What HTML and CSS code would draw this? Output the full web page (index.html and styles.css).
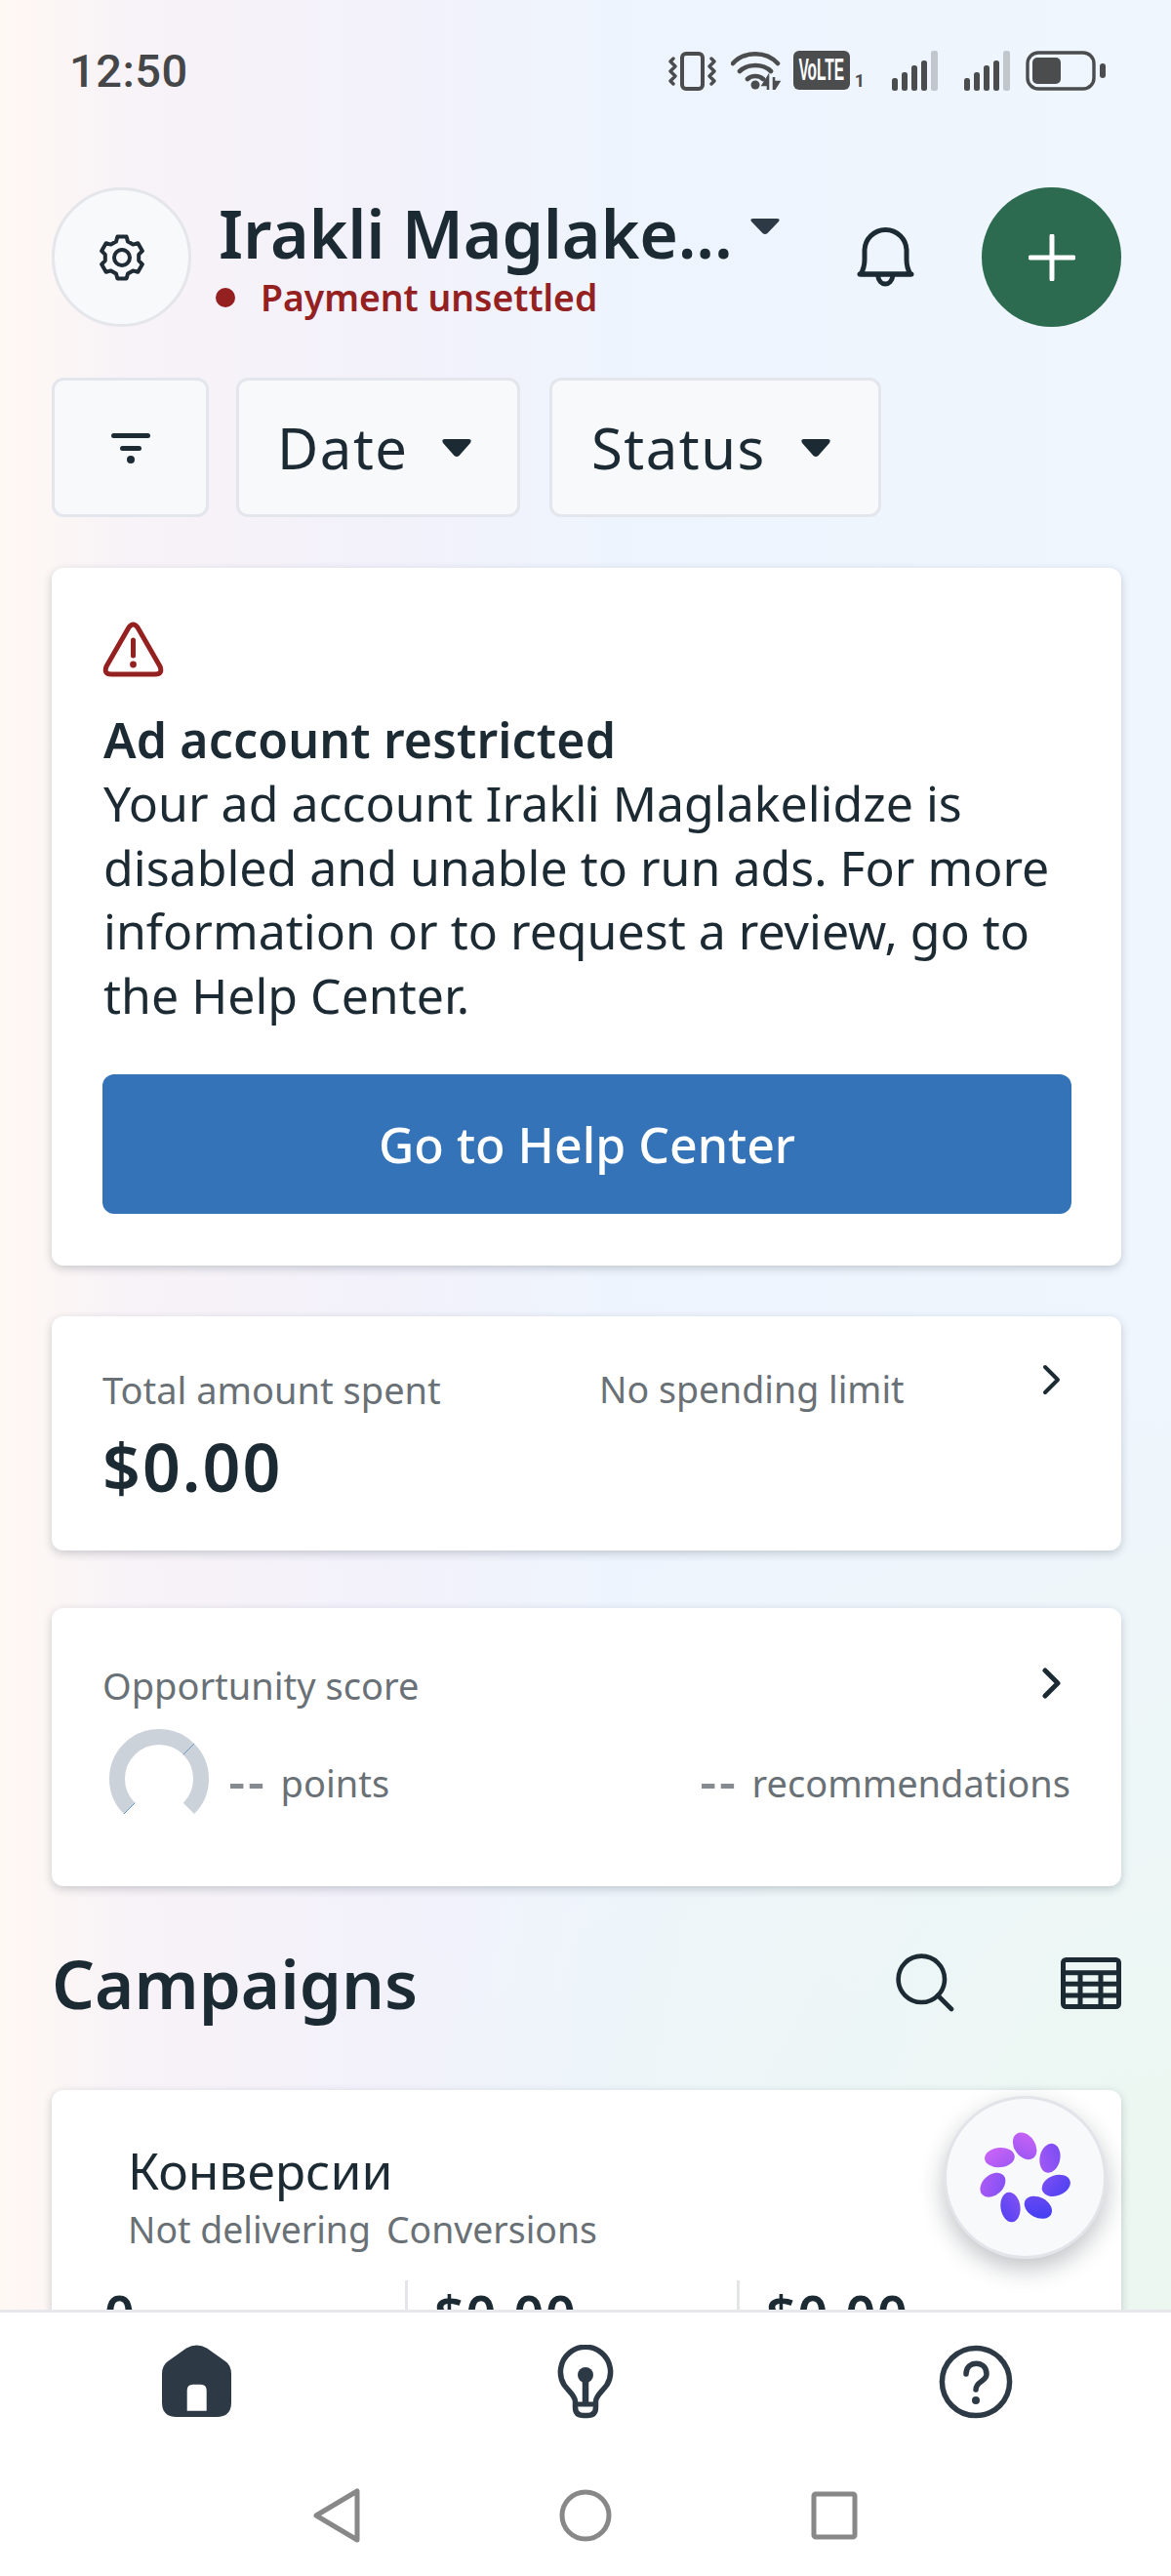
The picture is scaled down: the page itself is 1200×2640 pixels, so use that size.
FILE: index.html
```html
<!DOCTYPE html>
<html lang="en">
<head>
<meta charset="utf-8">
<title>Ads Manager</title>
<link rel="stylesheet" href="styles.css">
</head>
<body>
<div class="phone">
  <div class="status">
    <span class="time">12:50</span>
    <div class="status-icons">
      <svg class="si-vib" width="49" height="40" viewBox="0 0 49 40" fill="none" stroke="#4a4c4e"><rect x="14" y="2" width="21" height="36" rx="4" stroke-width="4"/><path d="M5 7l-3 3 5 5-5 5 5 5-5 5 3 3M44 7l3 3-5 5 5 5-5 5 5 5-3 3" stroke-width="3.4" stroke-linecap="round" stroke-linejoin="round"/></svg>
      <svg class="si-wifi" width="52" height="40" viewBox="0 0 52 40" fill="none" stroke="#4a4c4e" stroke-width="4.6"><path d="M2 13C14 0 36 0 48 13M9 21c8-8 24-8 32 0M17 29c4-4 12-4 16 0" stroke-linecap="round"/><circle cx="25" cy="35" r="4.5" fill="#4a4c4e" stroke="none"/><path d="M38 40V27l-5 8h5M44 27v13l5-8h-5" stroke-width="2.6" fill="#4a4c4e"/></svg>
      <div class="volte"><span class="volte-box"><span class="volte-text">VoLTE</span></span><span class="volte-sub">1</span></div>
      <svg class="si-sig" width="47" height="41" viewBox="0 0 47 41"><g fill="#4a4c4e"><rect x="0" y="28" width="6" height="13" rx="2.5"/><rect x="10" y="22" width="6" height="19" rx="2.5"/><rect x="20" y="15" width="6" height="26" rx="2.5"/><rect x="30" y="10" width="6" height="31" rx="2.5"/></g><rect x="40" y="0" width="7" height="41" rx="2.5" fill="#c2c6cd"/></svg>
      <svg class="si-sig" width="47" height="41" viewBox="0 0 47 41"><g fill="#4a4c4e"><rect x="0" y="28" width="6" height="13" rx="2.5"/><rect x="10" y="22" width="6" height="19" rx="2.5"/><rect x="20" y="15" width="6" height="26" rx="2.5"/><rect x="30" y="10" width="6" height="31" rx="2.5"/></g><rect x="40" y="0" width="7" height="41" rx="2.5" fill="#c2c6cd"/></svg>
      <svg class="si-bat" width="82" height="41" viewBox="0 0 82 41" fill="none"><rect x="2" y="2" width="68" height="37" rx="11" stroke="#4a4c4e" stroke-width="3.4"/><rect x="7" y="7" width="29" height="27" rx="5" fill="#4a4c4e"/><rect x="76" y="13" width="6" height="15" rx="3" fill="#4a4c4e"/></svg>
    </div>
  </div>

  <main class="main">
    <header class="head">
      <div class="gear-btn">
        <svg width="52" height="52" viewBox="-2 -2 52 52" fill="none" stroke="#1f2b35" stroke-width="4" stroke-linejoin="round"><polygon points="19.4,2.5 28.6,2.5 30,7.6 35.25,10.6 40.35,9.3 44.9,17.2 41.2,20.95 41.2,27.05 44.9,30.8 40.35,38.7 35.25,37.4 30,40.45 28.6,45.5 19.4,45.5 18,40.45 12.75,37.4 7.65,38.7 3.1,30.8 6.8,27.05 6.8,20.95 3.1,17.2 7.65,9.3 12.75,10.6 18,7.6"/><circle cx="24" cy="24" r="8"/></svg>
      </div>
      <div class="account">
        <div class="account-row">
          <span class="account-name">Irakli Maglake...</span>
          <svg class="caret-lg" width="32" height="18" viewBox="0 0 32 18"><path d="M4 1h24q4 0 2 3L18.500 16q-2.500 2-5 0L2 4Q0 1 4 1z" fill="#2d3a45"/></svg>
        </div>
        <div class="pay"><i class="pay-dot"></i><span>Payment unsettled</span></div>
      </div>
      <svg class="bell" width="62" height="66" viewBox="0 0 62 66" fill="none" stroke="#1c2b33" stroke-width="5" stroke-linejoin="round"><path d="M5 51C8 46 9 42 9 36V27A21.500 21.500 0 0 1 52 27V36C52 42 53 46 56 51Z"/><path d="M22.500 52c1.500 12 14 12 15.500 0"/><path d="M4 51H57" stroke-linecap="round"/></svg>
      <div class="add-btn"><svg width="48" height="48" viewBox="0 0 48 48" stroke="#fff" stroke-width="5" stroke-linecap="round"><path d="M24 2v44M2 24h44"/></svg></div>
    </header>

    <div class="filters">
      <div class="chip chip-icon"><svg width="40" height="34" viewBox="0 0 40 34"><rect x="0" y="2" width="40" height="5" rx="2.500" fill="#1c2b33"/><rect x="9" y="15" width="22" height="5" rx="2.500" fill="#1c2b33"/><circle cx="20" cy="29" r="4" fill="#1c2b33"/></svg></div>
      <div class="chip chip-date"><span>Date</span><svg width="32" height="20" viewBox="0 0 32 20"><path d="M4 1h24q4 0 2 4L18.500 18q-2.500 2-5 0L2 5Q0 1 4 1z" fill="#1c2b33"/></svg></div>
      <div class="chip chip-status"><span>Status</span><svg width="32" height="20" viewBox="0 0 32 20"><path d="M4 1h24q4 0 2 4L18.500 18q-2.500 2-5 0L2 5Q0 1 4 1z" fill="#1c2b33"/></svg></div>
    </div>

    <section class="card card-alert">
      <svg class="warn" width="63" height="57" viewBox="0 0 63 57" fill="none" stroke="#94201f" stroke-width="5" stroke-linejoin="round"><path d="M27 6q4.500-6 9 0l23 40q3 8-5 8H9q-8 0-5-8z"/><path d="M31.500 19v16" stroke-linecap="round"/><circle cx="31.500" cy="44" r="3.400" fill="#94201f" stroke="none"/></svg>
      <h2 class="alert-title">Ad account restricted</h2>
      <p class="alert-body">Your ad account Irakli Maglakelidze is<br>disabled and unable to run ads. For more<br>information or to request a review, go to<br>the Help Center.</p>
      <div class="help-btn">Go to Help Center</div>
    </section>

    <section class="card card-spent">
      <div class="spent-col">
        <div class="label">Total amount spent</div>
        <div class="amount">$0.00</div>
      </div>
      <div class="label limit">No spending limit</div>
      <svg class="chev" width="22" height="32" viewBox="0 0 22 32" fill="none" stroke="#1c2b33" stroke-width="4" stroke-linecap="round" stroke-linejoin="round"><path d="M4 3l13 13L4 29"/></svg>
    </section>

    <section class="card card-score">
      <div class="score-top">
        <div class="label">Opportunity score</div>
        <svg class="chev" width="22" height="32" viewBox="0 0 22 32" fill="none" stroke="#1c2b33" stroke-width="5" stroke-linecap="round" stroke-linejoin="round"><path d="M4 3l13 13L4 29"/></svg>
      </div>
      <div class="score-row">
        <svg class="gauge" width="104" height="104" viewBox="0 0 104 104" fill="none"><path d="M21.600 82.400A43 43 0 1 1 82.400 82.400" stroke="#ccd2d9" stroke-width="16"/><path d="M76.700 27.300L88 16M27.300 76.700L16 88" stroke="#6a9ac0" stroke-width="1"/></svg>
        <span class="label points"><span class="dash">--</span> points</span>
        <span class="label recs"><span class="dash">--</span> recommendations</span>
      </div>
    </section>

    <div class="camp-head">
      <h2 class="camp-title">Campaigns</h2>
      <svg class="camp-search" width="62" height="60" viewBox="0 0 62 60" fill="none" stroke="#1c2b33" stroke-width="4.600" stroke-linecap="round"><circle cx="26.300" cy="26.300" r="23.700"/><path d="M43 43l14 14"/></svg>
      <svg class="camp-table" width="62" height="53" viewBox="0 0 62 53" fill="none" stroke="#1c2b33" stroke-width="5"><rect x="2.500" y="2.500" width="57" height="48" rx="3"/><path d="M2.500 15.700h57M2.500 27.300h57M2.500 39h57M20 15.700V51M41 15.700V51"/></svg>
    </div>

    <section class="card card-camp">
      <div class="camp-name">Конверсии</div>
      <div class="label camp-sub"><span>Not delivering</span><span>Conversions</span></div>
      <div class="stats">
        <div class="stat stat-a">0</div>
        <div class="stat stat-b">$0.00</div>
        <div class="stat stat-c">$0.00</div>
      </div>
    </section>
  </main>

  <div class="fab">
    <svg width="97" height="97" viewBox="188 190 290 290">
      <defs><linearGradient id="petal" gradientUnits="userSpaceOnUse" x1="240" y1="200" x2="400" y2="470"><stop offset="0" stop-color="#db68f6"/><stop offset="1" stop-color="#3b3cf2"/></linearGradient></defs>
      <g fill="url(#petal)">
        <ellipse cx="332" cy="239" rx="45" ry="32" transform="rotate(55 332 239)"/>
        <ellipse cx="255" cy="274" rx="46" ry="30" transform="rotate(-5 255 274)"/>
        <ellipse cx="409" cy="276" rx="45" ry="31" transform="rotate(-78 409 276)"/>
        <ellipse cx="428" cy="360" rx="45" ry="31" transform="rotate(-20 428 360)"/>
        <ellipse cx="234" cy="358" rx="44" ry="31" transform="rotate(-42 234 358)"/>
        <ellipse cx="288" cy="426" rx="46" ry="30" transform="rotate(82 288 426)"/>
        <ellipse cx="373" cy="427" rx="45" ry="31" transform="rotate(28 373 427)"/>
      </g>
    </svg>
  </div>

  <nav class="bottom">
    <div class="tabs">
      <svg width="71" height="74" viewBox="0 0 71 74"><path d="M25 3.500L6 17Q0 21 0 30V59Q0 74 15 74H56Q71 74 71 59V30Q71 21 65 17L46 3.500Q35.500-2.500 25 3.500Z" fill="#2d3a45"/><path d="M25.700 67.700V46.700q0-6 6-6h8q6 0 6 6v21z" fill="#fff"/></svg>
      <svg width="62" height="76" viewBox="0 0 62 76" fill="none" stroke="#2d3a45" stroke-width="5.500" stroke-linejoin="round"><path d="M20.500 62V58C20.500 52 14 48 9 41A25.600 25.600 0 1 1 53 41C48 48 41.500 52 41.500 58V64Q41.500 72.500 33 72.500H29Q20.500 72.500 20.500 64Z"/><path d="M20.500 61H41.500" stroke-width="5"/><path d="M31 31V61" stroke-width="6.500"/><circle cx="31" cy="31" r="8" fill="#2d3a45" stroke="none"/></svg>
      <svg width="76" height="76" viewBox="0 0 76 76" fill="none" stroke="#2d3a45" stroke-width="5.500" stroke-linecap="round"><circle cx="38" cy="38" r="34.600"/><path d="M28 30C28 15.500 49 15.500 49 30C49 38 38 37 38 46"/><circle cx="38" cy="57" r="4" fill="#2d3a45" stroke="none"/></svg>
    </div>
    <div class="sysnav">
      <svg width="48" height="56" viewBox="0 0 48 56" fill="none" stroke="#888" stroke-width="5" stroke-linejoin="round"><path d="M45 3v50L3 28z"/></svg>
      <svg width="54" height="54" viewBox="0 0 54 54" fill="none" stroke="#888" stroke-width="5"><circle cx="27" cy="27" r="24"/></svg>
      <svg width="48" height="50" viewBox="0 0 48 50" fill="none" stroke="#888" stroke-width="5" stroke-linejoin="round"><rect x="3" y="3" width="42" height="44" rx="2"/></svg>
    </div>
  </nav>
</div>
</body>
</html>
```

FILE: styles.css
```css
* { box-sizing: border-box; }
html, body { margin: 0; padding: 0; }
body { width: 1200px; height: 2640px; overflow: hidden; font-family: "Noto Sans", "Open Sans", sans-serif; color: #1c2b33; }

.phone {
  position: relative;
  width: 1200px;
  height: 2640px;
  overflow: hidden;
  display: flex;
  flex-direction: column;
  background:
    radial-gradient(900px 1000px at 1250px 2350px, rgba(235,247,238,.95), rgba(235,247,238,0)),
    linear-gradient(90deg, #fff8f3 0%, #f8f3f7 10%, #f3f1fa 30%, #eef4fd 52%, #eff6fe 100%);
}

.status { height: 192px; flex: none; padding: 52px 67px 0 71px; display: flex; justify-content: space-between; align-items: flex-start; }
.time { font-family: Roboto, sans-serif; font-weight: 500; font-size: 47px; line-height: 42px; color: #444648; letter-spacing: .5px; }
.status-icons { display: flex; align-items: flex-start; }
.si-vib { margin-top: 1px; }
.si-wifi { margin-left: 15px; }
.volte { margin-left: 12px; display: flex; align-items: flex-end; }
.volte-box { width: 58px; height: 40px; border-radius: 6px; background: #4a4c4e; display: flex; align-items: center; justify-content: center; overflow: hidden; }
.volte-text { flex: none; color: #fff; font-family: "Liberation Sans", sans-serif; font-weight: 700; font-size: 31px; line-height: 40px; transform: scaleX(.5); }
.volte-sub { font-family: Roboto, sans-serif; font-weight: 700; font-size: 18px; line-height: 18px; color: #4a4c4e; margin-left: 5px; }
.si-sig { margin-left: 28px; }
.si-sig + .si-sig { margin-left: 27px; }
.si-bat { margin-left: 16px; }

.main { flex: 1; min-height: 0; overflow: hidden; padding: 0 51px 0 53px; display: flex; flex-direction: column; }

.head { height: 143px; flex: none; display: flex; align-items: center; }
.gear-btn { width: 143px; height: 143px; flex: none; border-radius: 50%; background: #f8f9fb; border: 3px solid #e4e6ea; display: flex; align-items: center; justify-content: center; }
.account { margin-left: 28px; width: 653px; flex: none; align-self: flex-start; padding-top: 7px; }
.account-row { display: flex; align-items: flex-start; height: 80px; }
.account-name { font-size: 68px; line-height: 80px; font-weight: 600; color: #1c2b33; letter-spacing: -.2px; }
.caret-lg { margin: 24px 0 0 18px; }
.pay { display: flex; align-items: center; height: 44px; margin-top: 4px; color: #94201f; font-size: 37.300px; line-height: 44px; font-weight: 600; }
.pay-dot { width: 20px; height: 20px; border-radius: 50%; background: #94201f; margin: 0 26px 0 -3px; }
.bell { flex: none; margin: -1px 0 0 0; }
.add-btn { width: 143px; height: 143px; flex: none; margin-left: auto; border-radius: 50%; background: #2c6b4f; display: flex; align-items: center; justify-content: center; }

.filters { display: flex; gap: 28px; margin-top: 52px; height: 143px; flex: none; }
.chip { height: 143px; background: #f8f9fb; border: 3px solid #e3e6ec; border-radius: 12px; display: flex; align-items: center; font-size: 58px; letter-spacing: 1.500px; color: #1c2b33; }
.chip-icon { width: 161px; justify-content: center; }
.chip-date { width: 291px; padding-left: 39px; gap: 33px; }
.chip-status { width: 340px; padding-left: 40px; gap: 35px; margin-left: 2px; }

.card { background: #fff; border-radius: 12px; box-shadow: 0 3px 10px rgba(30,45,65,.22); flex: none; }
.card-alert { margin-top: 52px; height: 715px; padding: 55px 52px 0 53px; display: flex; flex-direction: column; align-items: flex-start; }
.warn { flex: none; margin-left: -1px; }
.alert-title { margin: 32px 0 0; font-size: 50px; line-height: 65px; font-weight: 600; letter-spacing: .15px; }
.alert-body { margin: 0; font-size: 50px; line-height: 65.500px; font-weight: 400; }
.help-btn { align-self: stretch; margin: 48px -1px 0; height: 143px; background: #3573b9; border-radius: 12px; color: #fff; font-size: 50px; font-weight: 500; display: flex; align-items: center; justify-content: center; }

.label { color: #6a7176; font-size: 38px; line-height: 52px; }
.dash { font-size: 54px; line-height: 0; color: #858b90; font-weight: 500; letter-spacing: 2.500px; margin-right: 4px; vertical-align: -3px; }
.card-spent { margin-top: 52px; height: 240px; position: relative; padding: 49px 52px 0 52px; display: flex; align-items: flex-start; }
.spent-col { width: 509px; flex: none; }
.amount { font-size: 68px; line-height: 80px; font-weight: 600; letter-spacing: 2px; margin-top: 13px; color: #1c2b33; }
.limit { flex: 1; font-size: 37.500px; }
.card-spent .chev { margin-top: 0; margin-right: 8px; }

.card-score { margin-top: 59px; height: 285px; padding: 53px 52px 0 52px; display: flex; flex-direction: column; }
.score-top { display: flex; justify-content: space-between; align-items: flex-start; }
.score-top .chev { margin-right: 8px; margin-top: 8px; }
.score-row { display: flex; align-items: flex-start; margin-top: 18px; }
.gauge { margin-left: 6px; flex: none; }
.points { margin: 30px 0 0 19px; }
.recs { margin: 30px 0 0 auto; }

.camp-head { display: flex; align-items: center; margin-top: 68px; height: 62px; flex: none; }
.camp-title { margin: 0; font-size: 69px; line-height: 84px; font-weight: 600; }
.camp-search { margin-left: auto; flex: none; margin-right: -2px; }
.camp-table { margin-left: 109px; flex: none; }

.card-camp { margin-top: 79px; height: 400px; padding: 49px 0 0 78px; }
.camp-name { font-size: 51.500px; line-height: 66px; }
.camp-sub { display: flex; gap: 16px; margin-top: 2px; font-size: 37.400px; }
.stats { display: flex; margin: 26px 0 0 -78px; }
.stat { font-size: 54px; line-height: 68px; font-weight: 600; letter-spacing: 1.600px; height: 120px; }
.stat-a { width: 362px; padding-left: 54px; }
.stat-b, .stat-c { border-left: 3px solid #e3e5e8; padding-left: 27px; width: 340px; }

.fab { position: absolute; left: 967px; top: 2148px; width: 167px; height: 167px; border-radius: 50%; background: #f8f9fb; border: 3px solid #e2e4e9; box-shadow: 0 10px 24px rgba(30,40,50,.28); display: flex; align-items: center; justify-content: center; }

.bottom { height: 273px; flex: none; background: #fff; border-top: 3px solid #e6e8eb; position: relative; }
.tabs { height: 150px; padding: 33px 0 0; display: grid; grid-template-columns: 402px 395px 406px; justify-items: center; align-items: start; }
.sysnav { display: grid; grid-template-columns: repeat(3, 255px); justify-content: center; justify-items: center; align-items: center; padding-top: 30px; }
```
